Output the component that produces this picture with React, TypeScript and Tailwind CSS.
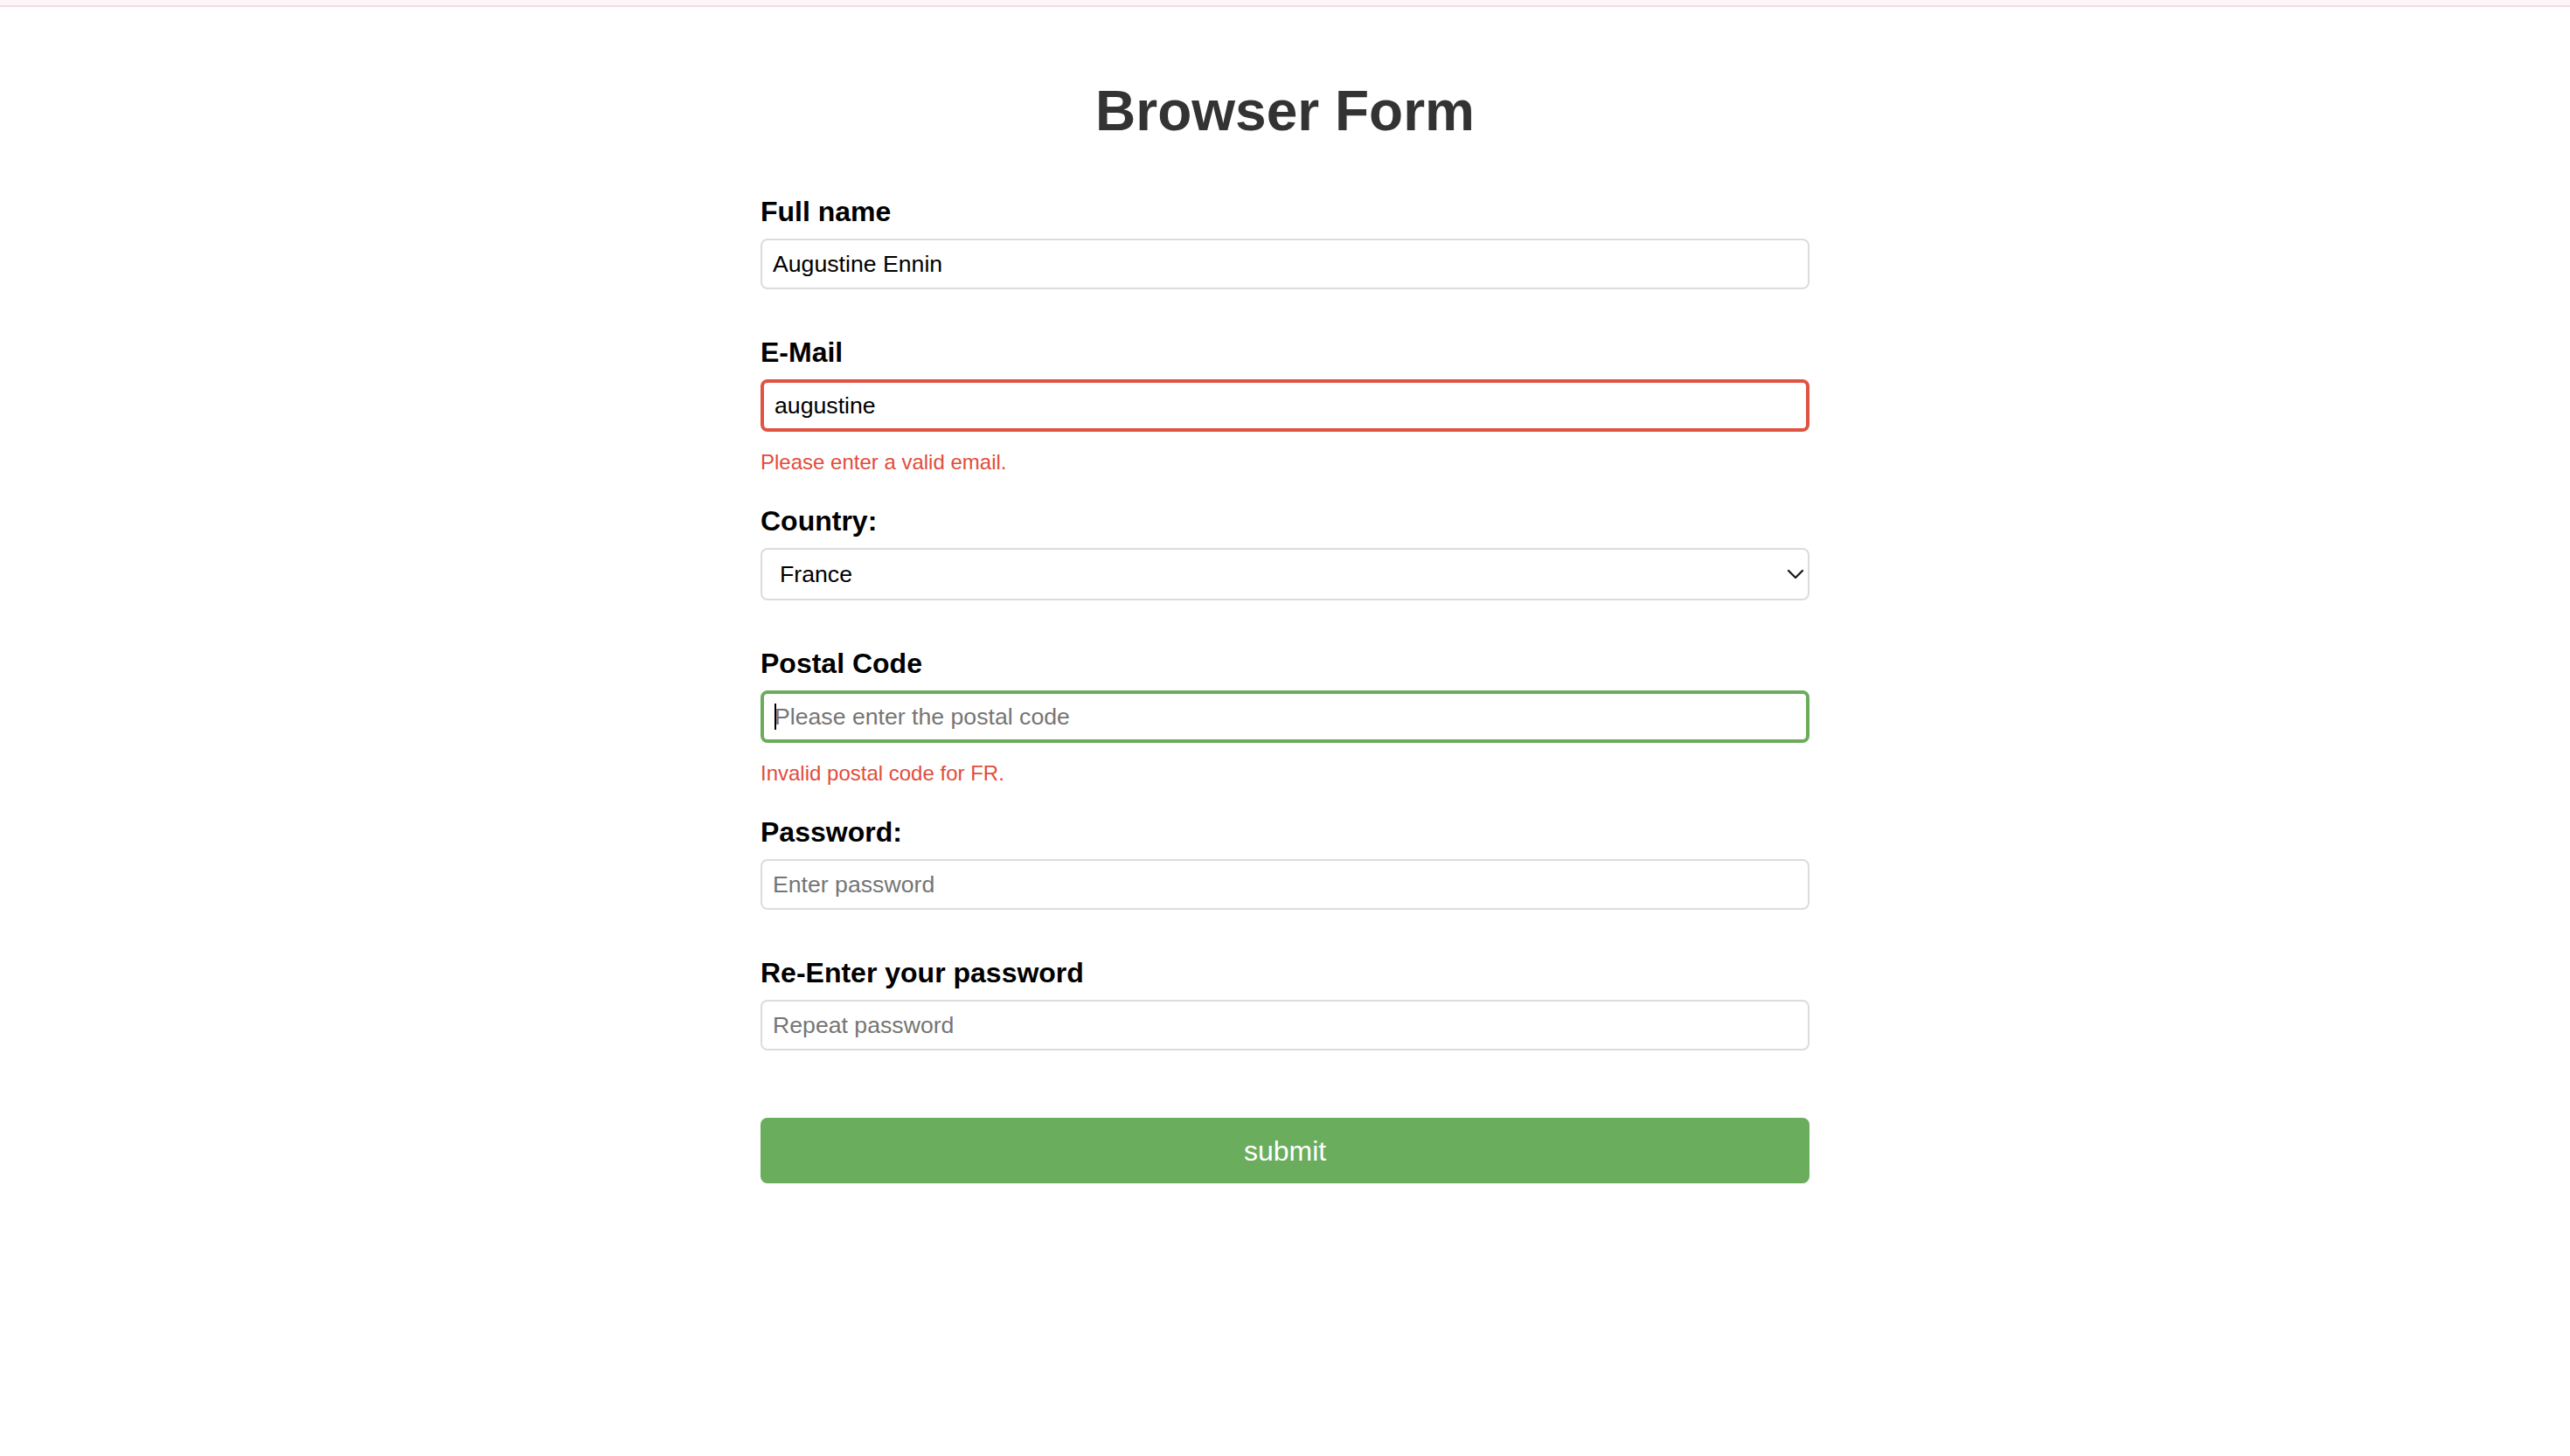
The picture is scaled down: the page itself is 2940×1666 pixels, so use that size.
import { useState } from 'react';

const countries = [
  { code: 'FR', name: 'France' },
  { code: 'DE', name: 'Germany' },
  { code: 'GH', name: 'Ghana' },
  { code: 'US', name: 'United States' },
];

const inputBase =
  'block w-full rounded-[8px] bg-white px-[12px] text-[26.67px] text-black outline-none placeholder:text-[#757575]';

function Label({ children }: { children: React.ReactNode }) {
  return <label className="mb-[13px] block text-[32px] font-bold leading-[36px] text-black">{children}</label>;
}

function ErrorText({ children }: { children: React.ReactNode }) {
  return <p className="mt-[21px] text-[24px] leading-[28px] text-[#e14d3c]">{children}</p>;
}

export default function App() {
  const [name, setName] = useState('Augustine Ennin');
  const [email, setEmail] = useState('augustine');
  const [country, setCountry] = useState('FR');
  const [postal, setPostal] = useState('');

  return (
    <div className="min-h-screen bg-white font-['Liberation_Sans',Arial,sans-serif]">
      <div className="h-[8px] border-b-2 border-[#f1dee4] bg-[#fdf6f8]" />

      <div className="mx-auto w-[1200px] pt-[82px]">
        <h1 className="mb-[60px] text-center text-[64px] font-bold leading-[74px] text-[#333333]">Browser Form</h1>

        <form onSubmit={(e) => e.preventDefault()}>
          <div className="mb-[54px]">
            <Label>Full name</Label>
            <input
              value={name}
              onChange={(e) => setName(e.target.value)}
              className={`${inputBase} h-[58px] border-2 border-[#dcdcdc]`}
            />
          </div>

          <div className="mb-[35px]">
            <Label>E-Mail</Label>
            <input
              value={email}
              onChange={(e) => setEmail(e.target.value)}
              className={`${inputBase} h-[60px] border-4 border-[#e05341]`}
            />
            <ErrorText>Please enter a valid email.</ErrorText>
          </div>

          <div className="mb-[54px]">
            <Label>Country:</Label>
            <div className="relative">
              <select
                value={country}
                onChange={(e) => setCountry(e.target.value)}
                className="block h-[60px] w-full appearance-none rounded-[8px] border-2 border-[#dcdcdc] bg-white pl-[20px] text-[26.67px] text-black outline-none"
              >
                {countries.map((c) => (
                  <option key={c.code} value={c.code}>
                    {c.name}
                  </option>
                ))}
              </select>
              <svg
                className="pointer-events-none absolute right-[6px] top-1/2 -translate-y-1/2"
                width="20"
                height="12"
                viewBox="0 0 20 12"
                fill="none"
              >
                <path d="M2 2l8 8 8-8" stroke="#1f1f1f" strokeWidth="2.4" strokeLinecap="round" strokeLinejoin="round" />
              </svg>
            </div>
          </div>

          <div className="mb-[35px]">
            <Label>Postal Code</Label>
            <div className="relative">
              <input
                value={postal}
                onChange={(e) => setPostal(e.target.value)}
                placeholder="Please enter the postal code"
                className={`${inputBase} h-[60px] border-4 border-[#6aac5c]`}
              />
              {/* text caret */}
              <span className="pointer-events-none absolute left-[16px] top-[15px] h-[30px] w-[2px] bg-black" />
            </div>
            <ErrorText>Invalid postal code for FR.</ErrorText>
          </div>

          <div className="mb-[54px]">
            <Label>Password:</Label>
            <input
              type="password"
              placeholder="Enter password"
              className={`${inputBase} h-[58px] border-2 border-[#dcdcdc]`}
            />
          </div>

          <div className="mb-[77px]">
            <Label>Re-Enter your password</Label>
            <input
              type="password"
              placeholder="Repeat password"
              className={`${inputBase} h-[58px] border-2 border-[#dcdcdc]`}
            />
          </div>

          <button
            type="submit"
            className="block h-[75px] w-full rounded-[8px] bg-[#6aad5c] text-[32px] text-white"
          >
            submit
          </button>
        </form>
      </div>
    </div>
  );
}
